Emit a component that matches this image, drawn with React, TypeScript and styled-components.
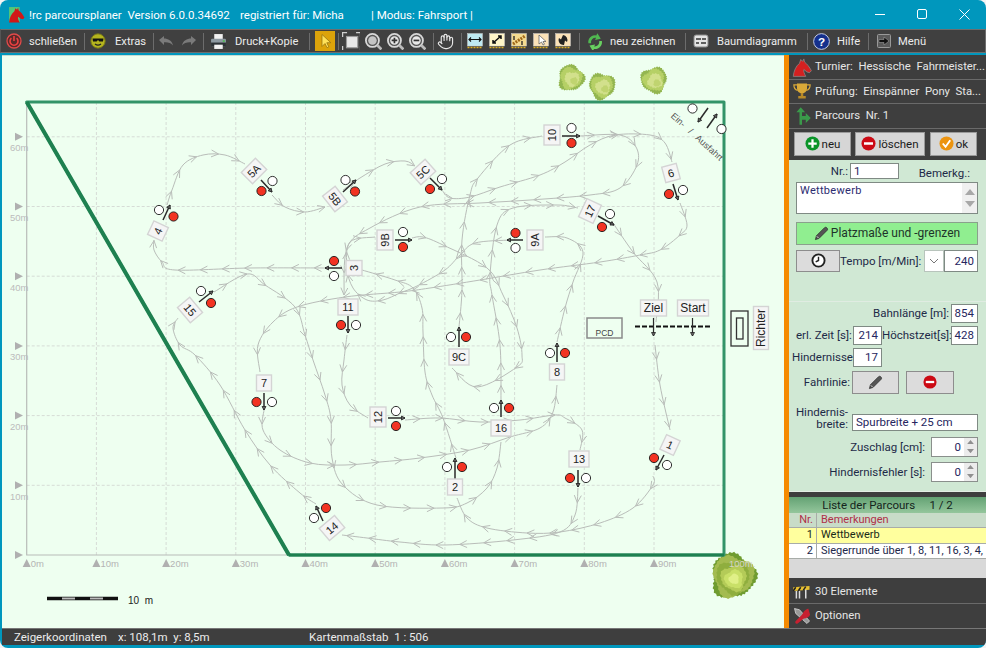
import React from 'react';
import styled, { createGlobalStyle } from 'styled-components';
import { Hand } from 'lucide-react';

const Global = createGlobalStyle`
  html, body { margin: 0; padding: 0; background: #f4f4f4; overflow: hidden; }
  #root { width: 986px; height: 648px; }
  * { box-sizing: border-box; }
`;
const UI = `Roboto, "Noto Sans", sans-serif`;

const Frame = styled.div`
  width: 986px; height: 648px; background: #0097bd; border-radius: 8px 8px 8px 8px;
  display: flex; flex-direction: column; overflow: hidden; font-family: ${UI}; font-size: 11.5px;
`;
const TitleBar = styled.div`
  height: 29px; display: flex; align-items: center; padding-left: 8px; color: #fff; font-size: 11.5px; flex: none;
`;
const TitleText = styled.span<{ $ml: number; $w: number }>`
  margin-left: ${p => p.$ml}px; width: ${p => p.$w}px; white-space: pre; flex: none;
`;
const WinButtons = styled.div`
  margin-left: auto; display: flex;
`;
const WinButton = styled.div`
  width: 41px; height: 29px; display: flex; align-items: center; justify-content: center; margin-right: 1px;
`;
const Toolbar = styled.div`
  height: 24px; flex: none; background: #404040; border: 1px solid #6e6e6e; border-left-color: #555; display: flex; align-items: center; color: #ececec;
  font-size: 11.2px; margin-bottom: 2px;
`;
const Group = styled.div<{ $w: number; $pl: number; $gap: number }>`
  width: ${p => p.$w}px; padding-left: ${p => p.$pl}px; display: flex; align-items: center; gap: ${p => p.$gap}px; flex: none; white-space: nowrap;
`;
const Sep = styled.div`
  width: 1px; height: 17px; background: #6c6c6c; flex: none;
`;
const ActiveTool = styled.div`
  width: 20px; height: 20px; background: #dca30a; display: flex; align-items: center; justify-content: center;
`;
const Main = styled.div`
  flex: 1; display: flex; min-height: 0; padding-left: 2px; margin-top: 0;
`;
const MapArea = styled.div`
  width: 782px; height: 573px; background: #eefff0; flex: none; border-top: 1px solid #c4dcd2;
  svg { display: block; }
`;
const Orange = styled.div`
  width: 5px; background: #f58a00; flex: none;
`;
const Panel = styled.div`
  width: 197px; flex: none; display: flex; flex-direction: column; background: #3e3e3e;
`;
const SideHead = styled.div`
  height: 24.5px; display: flex; align-items: center; gap: 3px; padding-left: 3px; color: #e6e6e6; font-size: 11.3px;
  border-bottom: 1.5px solid #6a6a6a; white-space: pre; flex: none; overflow: hidden;
`;
const ButtonBar = styled.div`
  height: 31px; flex: none; display: flex; align-items: flex-start; padding: 3px 0 0 5px;
`;
const SoftButton = styled.button<{ $w: number; $ml?: number }>`
  width: ${p => p.$w}px; height: 24px; margin-left: ${p => p.$ml || 0}px; background: #d6d6d6; border: 1px solid #9a9a9a; padding: 0; flex: none;
  display: flex; align-items: center; justify-content: center; gap: 2px; font: 11.5px ${UI}; color: #1a1a1a;
`;
const Form = styled.div`
  height: 332px; flex: none; background: #d0e8d4; padding: 3px 8px 0 7px; display: flex; flex-direction: column; border-bottom: 1px solid #e4efe6; color: #1e2a48; font-size: 11.5px;
`;
const Row = styled.div<{ $mt: number; $h: number }>`
  margin-top: ${p => p.$mt}px; height: ${p => p.$h}px; display: flex; align-items: center; flex: none;
`;
const RuleRow = styled.div`
  height: 1px; background: #e0ece2; margin: 29px -8px 2px -7px; flex: none;
`;
const Label = styled.div<{ $w: number; $end?: boolean; $out?: number }>`
  width: ${p => p.$w}px; margin-left: ${p => -(p.$out || 0)}px; text-align: right; white-space: nowrap; flex: none; line-height: 12px;
  ${p => p.$end ? 'align-self: flex-end;' : ''}
`;
const Field = styled.div<{ $w: number; $ml?: number; $left?: boolean }>`
  width: ${p => p.$w}px; height: 100%; margin-left: ${p => p.$ml ?? 2}px; background: #fff; border: 1px solid #7f8a84; flex: none;
  display: flex; align-items: center; justify-content: ${p => p.$left ? 'flex-start' : 'flex-end'}; padding: 0 3px; color: #262660; font-size: 11.5px;
`;
const MemoBox = styled.div`
  height: 32px; background: #fff; border: 1px solid #7f8a84; display: flex; justify-content: space-between; padding-left: 3px; color: #2c2c70; font-size: 11px; width: 100%;
`;
const MemoText = styled.div`
  padding-top: 1px; letter-spacing: 0.3px;
`;
const ScrollBar = styled.div`
  width: 15px; background: #f0f0f0; display: flex; flex-direction: column; align-items: center; justify-content: space-between; padding: 6px 0;
`;
const GreenButton = styled.button`
  width: 100%; height: 100%; background: #90ee90; border: 1px solid #8aa08c; font: 12px ${UI}; color: #20342a; display: flex; align-items: center; justify-content: center; gap: 2px; padding: 0;
`;
const GreyButton = styled.button<{ $w: number; $ml?: number }>`
  width: ${p => p.$w}px; height: 100%; margin-left: ${p => p.$ml || 0}px; background: #dcdcdc; border: 1px solid #8d8d8d; flex: none; display: flex; align-items: center; justify-content: center; padding: 0;
`;
const Combo = styled.div`
  width: 20px; height: 100%; margin-left: 5px; background: #fff; border: 1px solid #b8c4bc; flex: none; display: flex; align-items: center; justify-content: center;
`;
const Spin = styled.div`
  width: 47px; height: 100%; margin-left: 6px; background: #fff; border: 1px solid #8a8f8c; display: flex; justify-content: flex-end; flex: none; color: #262660; font-size: 11.5px;
`;
const SpinVal = styled.div`
  display: flex; align-items: center; padding-right: 3px;
`;
const SpinBtns = styled.div`
  width: 13px; background: #ececec; display: flex; flex-direction: column; align-items: center; justify-content: space-around;
`;
const WideField = styled.div`
  height: 17px; margin-top: 9px; display: flex;
`;
const ListBlock = styled.div`
  flex: none; display: flex; flex-direction: column; height: 86px; background: #d9d9d9; border-top: 5px solid #3e3e3e; margin-top: 0;
`;
const ListTitle = styled.div`
  height: 16px; background: linear-gradient(#64a274, #94c69c); text-align: center; color: #14241c; font-size: 11.5px; line-height: 16px; white-space: pre; flex: none;
`;
const ListRow = styled.div<{ $bg: string; $c: string }>`
  height: 15.5px; display: grid; grid-template-columns: 28px 169px; background: ${p => p.$bg}; color: ${p => p.$c}; border-bottom: 1px solid #a8aca8; font-size: 11px; line-height: 14px; flex: none; overflow: hidden;
`;
const CellNr = styled.div`
  text-align: right; padding-right: 3px; border-right: 1px solid #a8aca8;
`;
const CellTxt = styled.div`
  padding-left: 4px; white-space: nowrap; overflow: hidden;
`;
const PanelGap = styled.div`
  height: 2px; flex: none;
`;
const Status = styled.div`
  height: 17px; flex: none; margin-left: 2px; background: #3e3e3e; border-top: 1px solid #777; color: #ececec; display: flex; align-items: center; font-size: 11.5px; white-space: pre;
`;
const StatusItem = styled.span<{ $w: number; $pl?: number }>`
  width: ${p => p.$w}px; padding-left: ${p => p.$pl || 0}px; flex: none;
`;
const BottomEdge = styled.div`
  height: 3px; flex: none;
`;

/* ---------- icons ---------- */
type IP = { s?: number; children?: React.ReactNode };
const I = ({ s = 16, children }: IP) => <svg width={s} height={s} viewBox="0 0 16 16" style={{ flex: 'none', display: 'block' }}>{children}</svg>;

const HORSE = 'M1 15.5C1.5 11 3 7.5 6 5L7 2l1.5 1.5L9.5 1.5 10 4c2 1.5 4 4 5.5 7l-1.5 1.5-2-.5-2.5-2C9 11.5 10 13.5 11 15.5z';
const Logo = () => <I s={17}><rect x="1" y="1" width="10" height="14" fill="#54c878" /><path d={HORSE} fill="#d01818" /></I>;
const Power = () => <I><circle cx="8" cy="8" r="7" fill="#5a2a2a" stroke="#e24a4a" strokeWidth="1.3" /><path d="M5.4 5.2a4 4 0 1 0 5.2 0" fill="none" stroke="#ef4040" strokeWidth="1.6" /><path d="M8 3v5" stroke="#ef4040" strokeWidth="1.6" /></I>;
const Smiley = () => <I><circle cx="8" cy="8" r="7.2" fill="#b5b51e" stroke="#74741a" /><path d="M2.5 5.6h11l-.5 3h-3.6L8 7l-1.4 1.6H3z" fill="#111" /><path d="M5 11c2 1.6 4 1.6 6 0" stroke="#222" fill="none" strokeWidth="1.2" /></I>;
const Undo = ({ flip }: { flip?: boolean }) => <I><g transform={flip ? 'matrix(-1 0 0 1 16 0)' : undefined}><path d="M1 7L6 3v2.6c4 0 8 2 9 7-2-3-5-3.6-9-3.4V12z" fill="#7a7a7a" /></g></I>;
const Printer = () => <I s={17}><rect x="4" y="1" width="8" height="5" fill="#f2f2f2" /><rect x="1" y="5.5" width="14" height="7" rx="1" fill="#8d99a1" /><rect x="1" y="9" width="14" height="3.5" fill="#2c3135" /><rect x="4" y="11" width="8" height="4" fill="#f2f2f2" /><rect x="12" y="7" width="2" height="1.2" fill="#3fc040" /></I>;
const Cursor = () => <I><path d="M5 1.5v12l3-3 2 4.2 1.8-.8-2-4.2h4z" fill="#ffe25a" stroke="#8c6c10" strokeWidth=".7" /></I>;
const Fit = () => <I s={18}><rect x="4" y="4" width="10" height="10" fill="#e8e8e8" stroke="#9a9a9a" /><path d="M1 5V1h4M13 1h4v4M17 13v4h-4M5 17H1v-4" transform="translate(-.5 -.5)" stroke="#cfcfcf" fill="none" strokeWidth="1.2" /></I>;
const Lens = ({ m }: { m?: '+' | '-' }) => <I s={18}><circle cx="7.5" cy="7.5" r="5.8" fill="#555" stroke="#d8d8d8" strokeWidth="1.6" /><circle cx="7.5" cy="7.5" r="3.8" fill={m ? '#e8e8e8' : '#c4c4c4'} /><path d="M11.8 11.8L15.5 15.5" stroke="#bbb" strokeWidth="2.4" />{m && <path d={m === '+' ? 'M5 7.5h5M7.5 5v5' : 'M5 7.5h5'} stroke="#333" strokeWidth="1.5" />}</I>;
const Tile = ({ bg, children }: { bg: string; children: React.ReactNode }) => <I><rect x=".5" y=".5" width="15" height="12.5" fill={bg} stroke="#ccc" strokeWidth=".5" /><path d="M.5 14.5h15" stroke="#e0b020" strokeWidth="1.6" strokeDasharray="2 1" />{children}</I>;
const Refresh = () => <I s={18}><path d="M3 10a6 6 0 0 1 7-7l1-2 3 5-5 1 .8-1.8A4 4 0 0 0 5.4 10z" fill="#50b850" /><path d="M15 8a6 6 0 0 1-7 7l-1 2-3-5 5-1-.8 1.8a4 4 0 0 0 4.4-4.8z" fill="#68d060" /></I>;
const Tree = () => <I><rect x="1" y="2" width="14" height="12" rx="2" fill="#e4e4e4" stroke="#888" /><path d="M3 6h5M9 6h4M3 10h3M8 10h5" stroke="#333" strokeWidth="1.6" /></I>;
const Help = () => <I s={17}><circle cx="8" cy="8" r="7.4" fill="#15308c" stroke="#c8d0e8" strokeWidth=".9" /><text x="8" y="12" textAnchor="middle" fontSize="11" fontWeight="700" fill="#fff" fontFamily="Liberation Sans, sans-serif">?</text></I>;
const MenuIc = () => <I><rect x="1.5" y="1.5" width="13" height="13" rx="1" fill="#5a5a5a" stroke="#999" /><path d="M3 6.5h5V4l5 4-5 4V9.5H3z" fill="#111" stroke="#ccc" strokeWidth=".4" /></I>;
const Horse = () => <I s={20}><path d={HORSE} fill="#d42020" stroke="#8a8a8a" strokeWidth=".6" /></I>;
const Trophy = () => <I s={20}><path d="M4 2h8v4a4 4 0 0 1-8 0z" fill="#d8a838" /><path d="M4 3H1.5c0 3 1 4 3 4.5M12 3h2.5c0 3-1 4-3 4.5" stroke="#d8a838" fill="none" /><path d="M7 9.5h2V12h2v2H5v-2h2z" fill="#b88a28" /></I>;
const Sign = () => <I s={20}><path d="M6 15V5H3.5L7 1l3.5 4H8v3h3V5.5l4 4-4 4V11H8v4z" fill="#3a9a4a" /></I>;
const Cones = () => <I s={20}><path d="M1 5l13-1v3L1 8z" fill="#e8c030" /><path d="M3 5L1 8M7 5L5 8M11 4.5L9 7.5" stroke="#222" strokeWidth="1.2" /><path d="M3.5 8v6M11 7v7M6 8v6" stroke="#ddd" strokeWidth="1.2" /></I>;
const Tools = () => <I s={20}><path d="M2 2l4 1 8 9-2 2-9-8z" fill="#999" stroke="#ddd" strokeWidth=".6" /><path d="M13 2c-3 1-4 3-5 5l-5 5c-1 1 0 3 1.5 2l5-4c2 0 4-1 5-3z" fill="#c82030" /></I>;
const Plus = () => <I s={15}><circle cx="8" cy="8" r="7.5" fill="#0a9428" /><path d="M3.5 8h9M8 3.5v9" stroke="#fff" strokeWidth="2.4" /></I>;
const Minus = ({ s = 15 }: { s?: number }) => <I s={s}><circle cx="8" cy="8" r="7.5" fill="#cc0a14" /><path d="M3.2 8h9.6" stroke="#fff" strokeWidth="2.6" /></I>;
const Ok = () => <I s={15}><circle cx="8" cy="8" r="7.5" fill="#ec9410" /><path d="M4 8l3 3.5 5-7" stroke="#fff" fill="none" strokeWidth="2" /></I>;
const Pencil = ({ s = 16 }: { s?: number }) => <I s={s}><path d="M1.5 14.5l1-4L11 2c1-1 2-.8 2.8 0s1 1.8 0 2.8l-8.5 8.5z" fill="#555" stroke="#222" strokeWidth=".7" /><path d="M3 11l2 2" stroke="#ddd" /></I>;
const Clock = () => <I s={15}><circle cx="8" cy="8" r="6.5" fill="#fff" stroke="#222" strokeWidth="2" /><path d="M8 4v4L5 9.5" stroke="#222" strokeWidth="1.5" fill="none" /></I>;
const Chevron = () => <svg width="10" height="6" viewBox="0 0 10 6"><path d="M1 1l4 4 4-4" stroke="#777" fill="none" /></svg>;
const Tri = ({ up, c = '#909090', w = 10 }: { up?: boolean; c?: string; w?: number }) => <svg width={w} height={w * .6} viewBox="0 0 10 6"><path d={up ? 'M0 6L5 0l5 6z' : 'M0 0h10L5 6z'} fill={c} /></svg>;

/* ---------- map ---------- */
type Pt = [number, number];
const X = (m: number) => 26.7 + m * 6.97;
const Y = (m: number) => 555 - m * 6.97;

const routes: Pt[][] = [
  [[613, 223], [633, 252], [657, 282], [656, 322]],
  [[655, 345], [660, 385], [670, 430]],
  [[653, 476], [653, 485], [633, 508], [600, 523], [560, 532], [527, 533], [487, 528], [467, 518], [457, 498]],
  [[456, 458], [443, 418], [432, 395], [425, 372], [423, 332], [422, 308], [413, 288], [395, 280], [362, 270]],
  [[330, 268], [250, 268], [175, 270], [162, 262], [154, 250], [154, 240]],
  [[167, 205], [172, 190], [183, 165], [203, 155], [225, 155], [245, 164]],
  [[272, 195], [285, 207], [305, 212], [325, 207]],
  [[343, 190], [360, 178], [385, 164], [405, 161], [415, 166]],
  [[442, 190], [450, 198], [470, 197], [500, 187], [540, 175], [565, 162], [590, 145], [615, 135], [650, 135], [665, 143], [672, 162]],
  [[680, 203], [687, 225], [680, 235], [660, 250], [640, 255], [600, 262], [540, 270], [480, 280], [430, 288], [400, 292], [345, 297], [297, 307], [273, 322], [258, 345], [260, 372]],
  [[264, 410], [263, 430], [280, 450], [310, 463], [345, 465], [380, 462], [420, 458], [470, 450], [510, 437], [540, 428], [553, 412], [557, 385]],
  [[557, 342], [565, 308], [573, 282], [583, 252], [567, 238], [545, 237]],
  [[510, 240], [475, 243], [460, 255], [445, 270], [417, 286], [400, 293], [383, 300], [367, 300], [353, 288], [347, 268], [350, 242], [375, 237]],
  [[412, 238], [423, 237], [443, 245], [487, 268], [503, 295], [517, 328], [522, 355], [517, 367], [477, 387], [452, 368]],
  [[459, 327], [462, 290], [462, 240], [470, 195], [478, 178], [510, 145], [542, 136]],
  [[580, 136], [620, 135], [636, 147], [637, 165], [620, 188], [590, 195], [530, 200], [480, 203], [420, 207], [370, 228], [347, 248], [344, 295]],
  [[347, 335], [344, 360], [342, 385], [350, 405], [368, 418]],
  [[405, 420], [440, 418], [480, 422], [520, 420], [555, 415], [565, 418], [582, 430], [580, 450]],
  [[578, 488], [575, 515], [560, 532], [513, 540], [445, 545], [400, 542], [367, 538], [342, 535]],
  [[316, 504], [300, 493], [270, 465], [245, 430], [220, 385], [195, 355], [180, 345], [173, 328], [178, 318]],
  [[214, 292], [247, 274], [265, 285], [295, 307], [305, 335], [313, 360], [325, 395], [331, 420], [332, 458], [343, 485], [377, 505], [443, 508], [467, 503], [487, 488], [497, 468], [501, 442]],
  [[501, 400], [500, 345], [492, 295], [490, 275], [497, 225], [513, 208], [557, 205], [578, 208]],
];

function bez(p: Pt[]) {
  const segs: [Pt, Pt, Pt, Pt][] = [];
  for (let i = 0; i < p.length - 1; i++) {
    const p0 = p[Math.max(i - 1, 0)], p1 = p[i], p2 = p[i + 1], p3 = p[Math.min(i + 2, p.length - 1)];
    segs.push([p1, [p1[0] + (p2[0] - p0[0]) / 6, p1[1] + (p2[1] - p0[1]) / 6], [p2[0] - (p3[0] - p1[0]) / 6, p2[1] - (p3[1] - p1[1]) / 6], p2]);
  }
  return segs;
}
function routeGeometry(p: Pt[]) {
  const segs = bez(p);
  const d = `M${p[0][0]} ${p[0][1]}` + segs.map(s => `C${s[1][0]} ${s[1][1]} ${s[2][0]} ${s[2][1]} ${s[3][0]} ${s[3][1]}`).join('');
  let acc = 8, prev = p[0], marks = '';
  for (const s of segs) {
    for (let k = 1; k <= 30; k++) {
      const t = k / 30, u = 1 - t;
      const q: Pt = [0, 1].map(i => u * u * u * s[0][i] + 3 * u * u * t * s[1][i] + 3 * u * t * t * s[2][i] + t * t * t * s[3][i]) as Pt;
      const dx = q[0] - prev[0], dy = q[1] - prev[1], l = Math.hypot(dx, dy);
      acc += l;
      if (acc >= 22 && l > 0) {
        acc = 0;
        const a = Math.atan2(dy, dx);
        const b = (o: number) => `${(q[0] - 8 * Math.cos(a + o)).toFixed(1)} ${(q[1] - 8 * Math.sin(a + o)).toFixed(1)}`;
        marks += `M${b(.45)}L${q[0].toFixed(1)} ${q[1].toFixed(1)}L${b(-.45)}`;
      }
      prev = q;
    }
  }
  return { d, marks };
}
const geometry = routes.map(routeGeometry);

type Ob = { t: string; W: Pt; R: Pt; A: Pt; B: Pt; L: Pt; rot: number };
const obstacles: Ob[] = [
  { t: '1', L: [670, 445], rot: 25, R: [654, 458], W: [667, 465], A: [664, 455], B: [656, 470] },
  { t: '2', L: [455, 487], rot: 0, W: [447, 467], R: [462, 467], A: [455, 480], B: [455, 458] },
  { t: '3', L: [354, 268], rot: -90, R: [334, 261], W: [334, 276], A: [342, 268], B: [325, 268] },
  { t: '4', L: [158, 231], rot: -65, W: [159, 210], R: [173.5, 216.5], A: [163, 220], B: [170, 205] },
  { t: '5A', L: [254, 171], rot: -45, W: [272.5, 181], R: [261.5, 191], A: [261, 180], B: [272, 192] },
  { t: '5B', L: [335, 199], rot: 52, W: [345.5, 180], R: [355, 191.5], A: [343, 192], B: [356, 180] },
  { t: '5C', L: [423, 172], rot: -42, W: [442, 179], R: [430, 189], A: [430, 178], B: [442, 190] },
  { t: '6', L: [671, 173], rot: -15, W: [683, 190], R: [669, 194], A: [673, 184], B: [678, 200] },
  { t: '7', L: [264, 383], rot: 0, W: [272, 402], R: [256.5, 402], A: [264, 393], B: [264, 410] },
  { t: '8', L: [557, 372], rot: 0, W: [550, 353], R: [565, 353], A: [557, 362], B: [557, 343] },
  { t: '9A', L: [535, 240], rot: -90, R: [515.5, 233], W: [515.5, 248], A: [523, 240], B: [507, 240] },
  { t: '9B', L: [385, 240], rot: -90, W: [403, 232], R: [403, 247], A: [395, 240], B: [412, 240] },
  { t: '9C', L: [459, 357], rot: 0, W: [451, 337], R: [466, 337], A: [459, 347], B: [459, 327] },
  { t: '10', L: [552, 135], rot: -90, W: [571.5, 128], R: [571.5, 143], A: [562, 136], B: [580, 136] },
  { t: '11', L: [348, 307], rot: 0, R: [341, 325], W: [356, 325], A: [348, 316], B: [348, 333] },
  { t: '12', L: [378, 417], rot: -90, W: [396, 411], R: [396, 426], A: [388, 418], B: [405, 418] },
  { t: '13', L: [579, 459], rot: 0, R: [570, 478], W: [586, 478], A: [578, 470], B: [578, 487] },
  { t: '14', L: [332, 528], rot: -40, R: [326, 508], W: [314, 518], A: [323, 521], B: [316, 506] },
  { t: '15', L: [190, 310], rot: 50, W: [201, 291], R: [211, 303], A: [199, 302], B: [213, 291] },
  { t: '16', L: [501, 428], rot: 0, W: [494, 408], R: [509, 408], A: [501, 417], B: [501, 400] },
  { t: '17', L: [590, 211], rot: -65, W: [610, 214], R: [602, 227], A: [598, 216], B: [614, 225] },
];

const Arrow = ({ A, B, w = 1.5 }: { A: Pt; B: Pt; w?: number }) => {
  const a = Math.atan2(B[1] - A[1], B[0] - A[0]) * 180 / Math.PI;
  return <g>
    <line x1={A[0]} y1={A[1]} x2={B[0]} y2={B[1]} stroke="#2a2a2a" strokeWidth={w} />
    <path d="M0 0L-3.5 -2V2Z" transform={`translate(${B[0]} ${B[1]}) rotate(${a})`} fill="#666" stroke="#222" strokeWidth=".8" />
  </g>;
};
const Flag = ({ p, red }: { p: Pt; red?: boolean }) => <circle cx={p[0]} cy={p[1]} r={4.6} fill={red ? '#f23322' : '#fff'} stroke="#1a1a1a" strokeWidth={.9} />;
const MapText = styled.text<{ $size: number; $c?: string }>`
  font-family: "Liberation Sans", Arial, sans-serif; font-size: ${p => p.$size}px; fill: ${p => p.$c || '#222'};
`;
const Sign2 = ({ L, rot, t, w, h = 16, size = 11 }: { L: Pt; rot: number; t: string; w: number; h?: number; size?: number }) => (
  <g transform={`translate(${L[0]} ${L[1]}) rotate(${rot})`}>
    <rect x={-w / 2} y={-h / 2} width={w} height={h} fill="#f5f5f5" stroke="#d4d4d4" strokeWidth={1.4} />
    <MapText $size={size} textAnchor="middle" y={size * .36}>{t}</MapText>
  </g>
);
const Obstacle = ({ o }: { o: Ob }) => (
  <g>
    <Arrow A={o.A} B={o.B} />
    <Flag p={o.W} /><Flag p={o.R} red />
    <Sign2 L={o.L} rot={o.rot} t={o.t} w={o.t.length > 1 ? 20 : 15} />
  </g>
);
function blob(cx: number, cy: number, r: number, seed: number, jag = 0.14, n = 46) {
  let d = '';
  for (let i = 0; i < n; i++) {
    const a = i / n * Math.PI * 2;
    const rr = r * (1 + .1 * Math.sin(a * 3 + seed) + .06 * Math.sin(a * 5 + seed * 2) + (i % 2 ? jag : -jag * .3));
    d += `${i ? 'L' : 'M'}${(cx + rr * Math.cos(a)).toFixed(1)} ${(cy + rr * Math.sin(a)).toFixed(1)}`;
  }
  return d + 'Z';
}
const Bush = ({ x, y, seed }: { x: number; y: number; seed: number }) => (
  <g>
    <path d={blob(x, y, 12.5, seed, .07, 70)} fill="#93b650" />
    <path d={blob(x, y, 10.5, seed + 1, .08, 50)} fill="#b6d066" />
    <path d={blob(x + 1, y + 1, 7, seed + 2, .1, 30)} fill="#d2e08c" />
    <path d={blob(x + 3, y + 3, 3.5, seed + 3, .1, 16)} fill="#c0d470" />
  </g>
);
const BigBush = ({ x, y }: { x: number; y: number }) => (
  <g>
    <path d={blob(x, y, 21.5, 1.2, .05, 70)} fill="#6f9c30" />
    <path d={blob(x, y, 20, 2.2, .04, 60)} fill="#a3bb50" />
    <path d={blob(x, y + 1, 16, 3.4, .05, 50)} fill="#8fae3e" />
    <path d={blob(x + 1, y + 2, 12.5, 4.1, .05, 40)} fill="#b4cb58" />
    <path d={blob(x + 1, y + 3, 9, 4.8, .05, 30)} fill="#c9e068" />
    <path d={blob(x + 1, y + 3, 5, 5.1, .03, 24)} fill="#e0f088" />
  </g>
);

const CourseMap = () => (
  <svg width={782} height={572} viewBox="2 56 782 572">
    {[0, 10, 20, 30, 40, 50, 60].map(m => (
      <g key={m}>
        {m > 0 && <line x1={26.7} x2={723} y1={Y(m)} y2={Y(m)} stroke="#d6dcd6" strokeDasharray="3 2" />}
        <path d={`M15 ${Y(m) - 4}L23 ${Y(m)}L15 ${Y(m) + 4}Z`} fill="#b0b0b0" />
        {m > 0 && <MapText $size={9.5} $c="#bcbcbc" x={10} y={Y(m) + 14.5}>{m}m</MapText>}
      </g>
    ))}
    {[0, 10, 20, 30, 40, 50, 60, 70, 80, 90, 100].map(m => (
      <g key={m}>
        {m > 0 && m < 100 && <line x1={X(m)} x2={X(m)} y1={102} y2={555} stroke="#d6dcd6" strokeDasharray="3 2" />}
        {m < 100 && <path d={`M${X(m) - 4} 567L${X(m)} 559L${X(m) + 4} 567Z`} fill="#b0b0b0" />}
      </g>
    ))}
    <path d="M26.7 102V555H290" fill="none" stroke="#b8bcb8" strokeWidth="1.2" />
    <BigBush x={733} y={576} />
    {[0, 10, 20, 30, 40, 50, 60, 70, 80, 90].map(m => <MapText key={m} $size={9.5} $c="#b4b4b4" x={X(m) + 4} y={567}>{m}m</MapText>)}
    <MapText $size={9.5} $c="#d4d4c8" x={729} y={567}>100m.</MapText>
    <path d="M26.7 102H724V555H289Z" fill="none" stroke="#339468" strokeWidth="3" strokeLinejoin="round" />
    <path d="M26.7 102L289 555" fill="none" stroke="#1e8050" strokeWidth="4" />
    <path d="M289 555H724" fill="none" stroke="#1e8050" strokeWidth="3" />
    {geometry.map((g, i) => <g key={i} fill="none" stroke="#b9bdb9" strokeWidth="1"><path d={g.d} /><path d={g.marks} /></g>)}
    {obstacles.map(o => <Obstacle key={o.t} o={o} />)}
    <Bush x={571} y={78} seed={1} /><Bush x={602} y={86} seed={2.5} /><Bush x={654} y={80} seed={4} />
    <Arrow A={[708, 108]} B={[698, 122]} w={1.5} />
    <Arrow A={[707, 128]} B={[717, 114]} w={1.5} />
    <Flag p={[692.5, 108.5]} /><Flag p={[721.5, 129]} />
    <MapText $size={9} $c="#555" textAnchor="middle" transform="translate(695 139) rotate(42)" style={{ whiteSpace: 'pre' }}>{'Ein-   /   Ausfahrt'}</MapText>
    <Sign2 L={[653.5, 308]} rot={0} t="Ziel" w={26} h={16} size={12} />
    <Sign2 L={[693, 308]} rot={0} t="Start" w={31} h={16} size={12} />
    <path d="M635 326.5H711" stroke="#111" strokeWidth="2" strokeDasharray="5 2" />
    <Arrow A={[653.5, 318]} B={[653.5, 336]} w={1.2} />
    <Arrow A={[692.5, 318]} B={[692.5, 336]} w={1.2} />
    <rect x="587" y="318" width="35" height="20" fill="none" stroke="#8a8a8a" strokeWidth="1.5" />
    <MapText $size={8.5} $c="#444" x={604.5} y={336} textAnchor="middle">PCD</MapText>
    <rect x="731" y="311" width="17" height="35" fill="none" stroke="#333" strokeWidth="1.3" />
    <rect x="736.5" y="318" width="6.5" height="21" fill="none" stroke="#333" strokeWidth="1.3" />
    <Sign2 L={[761, 328]} rot={-90} t="Richter" w={43} h={15} size={12} />
    <path d="M47 598.5H118" stroke="#111" strokeWidth="3.5" />
    <path d="M62 598.5H75M90 598.5H103" stroke="#bbb" strokeWidth="2" />
    <MapText $size={10} $c="#222" x={128} y={604} style={{ whiteSpace: 'pre' }}>{'10  m'}</MapText>
  </svg>
);

const App = () => (
  <Frame>
    <Global />
    <TitleBar>
      <Logo />
      <TitleText $ml={4} $w={211}>{'!rc parcoursplaner  Version 6.0.0.34692'}</TitleText>
      <TitleText $ml={0} $w={131}>registriert für: Micha</TitleText>
      <TitleText $ml={0} $w={120}>| Modus: Fahrsport |</TitleText>
      <WinButtons>
        <WinButton><svg width="11" height="11"><path d="M0 5.5h10" stroke="#fff" /></svg></WinButton>
        <WinButton><svg width="11" height="11"><rect x=".5" y=".5" width="9" height="9" rx="1.5" fill="none" stroke="#fff" /></svg></WinButton>
        <WinButton><svg width="11" height="11"><path d="M.5.5l10 10M10.5.5l-10 10" stroke="#fff" /></svg></WinButton>
      </WinButtons>
    </TitleBar>
    <Toolbar>
      <Group $w={83} $pl={5} $gap={7}><Power />schließen</Group><Sep />
      <Group $w={68} $pl={5} $gap={9}><Smiley />Extras</Group><Sep />
      <Group $w={49} $pl={4} $gap={7}><Undo /><Undo flip /></Group><Sep />
      <Group $w={105} $pl={6} $gap={8}><Printer />Druck+Kopie</Group><Sep />
      <Group $w={28} $pl={5} $gap={0}><ActiveTool><Cursor /></ActiveTool></Group><Sep />
      <Group $w={94} $pl={3} $gap={4}><Fit /><Lens /><Lens m="+" /><Lens m="-" /></Group><Sep />
      <Group $w={27} $pl={3} $gap={0}><Hand size={17} color="#e8e8e8" strokeWidth={1.6} /></Group><Sep />
      <Group $w={117} $pl={5} $gap={6}>
        <Tile bg="#bfeaf2"><path d="M2 6.5h12M4 4.5l-2 2 2 2M12 4.5l2 2-2 2" stroke="#111" fill="none" strokeWidth="1.1" /></Tile>
        <Tile bg="#fff6c8"><path d="M4 10l8-7M9 3h3v3M4 7v3h3" stroke="#111" fill="none" strokeWidth="1.5" /></Tile>
        <Tile bg="#f5dc90"><path d="M2 11L14 3" stroke="#a06818" strokeWidth="3" strokeDasharray="2 1" /><path d="M3 3v4M11 8v4" stroke="#222" strokeWidth="1.3" /></Tile>
        <Tile bg="#fbe2b8"><path d="M6 2v9l2.5-2 1.5 3 1.5-.8L10 8.5h3z" fill="#fff" stroke="#555" strokeWidth=".7" /></Tile>
        <Tile bg="#fbe2b8"><path d="M8 2a5 5 0 0 1 4 7L10 7.5 9 12a5 5 0 0 1-5-7l2 1.5z" fill="#222" /></Tile>
      </Group><Sep />
      <Group $w={105} $pl={5} $gap={7}><Refresh />neu zeichnen</Group><Sep />
      <Group $w={121} $pl={7} $gap={8}><Tree />Baumdiagramm</Group><Sep />
      <Group $w={60} $pl={5} $gap={7}><Help />Hilfe</Group><Sep />
      <Group $w={70} $pl={7} $gap={6}><MenuIc />Menü</Group>
    </Toolbar>
    <Main>
      <MapArea><CourseMap /></MapArea>
      <Orange />
      <Panel>
        <SideHead><Horse />{'Turnier:  Hessische  Fahrmeister...'}</SideHead>
        <SideHead><Trophy />{'Prüfung:  Einspänner  Pony  Sta...'}</SideHead>
        <SideHead><Sign />{'Parcours  Nr. 1'}</SideHead>
        <ButtonBar>
          <SoftButton $w={57}><Plus />neu</SoftButton>
          <SoftButton $w={70} $ml={4}><Minus />löschen</SoftButton>
          <SoftButton $w={47} $ml={5}><Ok />ok</SoftButton>
        </ButtonBar>
        <Form>
          <Row $mt={0} $h={16}>
            <Label $w={52}>Nr.:</Label><Field $w={49} $left>1</Field><Label $w={71} $end>Bemerkg.:</Label>
          </Row>
          <Row $mt={3} $h={32}>
            <MemoBox><MemoText>Wettbewerb</MemoText><ScrollBar><Tri up c="#a8a8a8" /><Tri c="#a8a8a8" /></ScrollBar></MemoBox>
          </Row>
          <Row $mt={8} $h={23}><GreenButton><Pencil s={15} />Platzmaße und -grenzen</GreenButton></Row>
          <Row $mt={5} $h={22}>
            <GreyButton $w={44}><Clock /></GreyButton>
            <Label $w={79}>Tempo [m/Min]:</Label>
            <Combo><Chevron /></Combo>
            <Field $w={34} $ml={0}>240</Field>
          </Row>
          <RuleRow />
          <Row $mt={0} $h={19}><Label $w={153}>Bahnlänge [m]:</Label><Field $w={27}>854</Field></Row>
          <Row $mt={3} $h={19}>
            <Label $w={55}>erl. Zeit [s]:</Label><Field $w={29}>214</Field>
            <Label $w={67}>Höchstzeit[s]:</Label><Field $w={27}>428</Field>
          </Row>
          <Row $mt={3} $h={19}><Label $w={59} $out={4}>Hindernisse:</Label><Field $w={29}>17</Field></Row>
          <Row $mt={4} $h={23}>
            <Label $w={54}>Fahrlinie:</Label>
            <GreyButton $w={47} $ml={2}><Pencil s={15} /></GreyButton>
            <GreyButton $w={48} $ml={7}><Minus s={14} /></GreyButton>
          </Row>
          <Row $mt={11} $h={26}>
            <Label $w={56} $out={4}>Hindernis-<br />breite:</Label>
            <WideField><Field $w={126} $ml={4} $left>Spurbreite + 25 cm</Field></WideField>
          </Row>
          <Row $mt={6} $h={20}>
            <Label $w={129}>Zuschlag [cm]:</Label>
            <Spin><SpinVal>0</SpinVal><SpinBtns><Tri up w={7} /><Tri w={7} /></SpinBtns></Spin>
          </Row>
          <Row $mt={5} $h={20}>
            <Label $w={129}>Hindernisfehler [s]:</Label>
            <Spin><SpinVal>0</SpinVal><SpinBtns><Tri up w={7} /><Tri w={7} /></SpinBtns></Spin>
          </Row>
        </Form>
        <ListBlock>
          <ListTitle>{'Liste der Parcours     1 / 2'}</ListTitle>
          <ListRow $bg="#c8dcc8" $c="#b03048"><CellNr>Nr.</CellNr><CellTxt>Bemerkungen</CellTxt></ListRow>
          <ListRow $bg="#ffff9e" $c="#1a2a18"><CellNr>1</CellNr><CellTxt>Wettbewerb</CellTxt></ListRow>
          <ListRow $bg="#fff" $c="#22284a"><CellNr>2</CellNr><CellTxt>Siegerrunde über 1, 8, 11, 16, 3, 4, 5.</CellTxt></ListRow>
        </ListBlock>
        <PanelGap />
        <SideHead><Cones />30 Elemente</SideHead>
        <SideHead><Tools />Optionen</SideHead>
      </Panel>
    </Main>
    <Status>
      <StatusItem $w={116} $pl={12}>Zeigerkoordinaten</StatusItem>
      <StatusItem $w={191}>{'x: 108,1m  y: 8,5m'}</StatusItem>
      <StatusItem $w={200}>{'Kartenmaßstab  1 : 506'}</StatusItem>
    </Status>
    <BottomEdge />
  </Frame>
);
export default App;
